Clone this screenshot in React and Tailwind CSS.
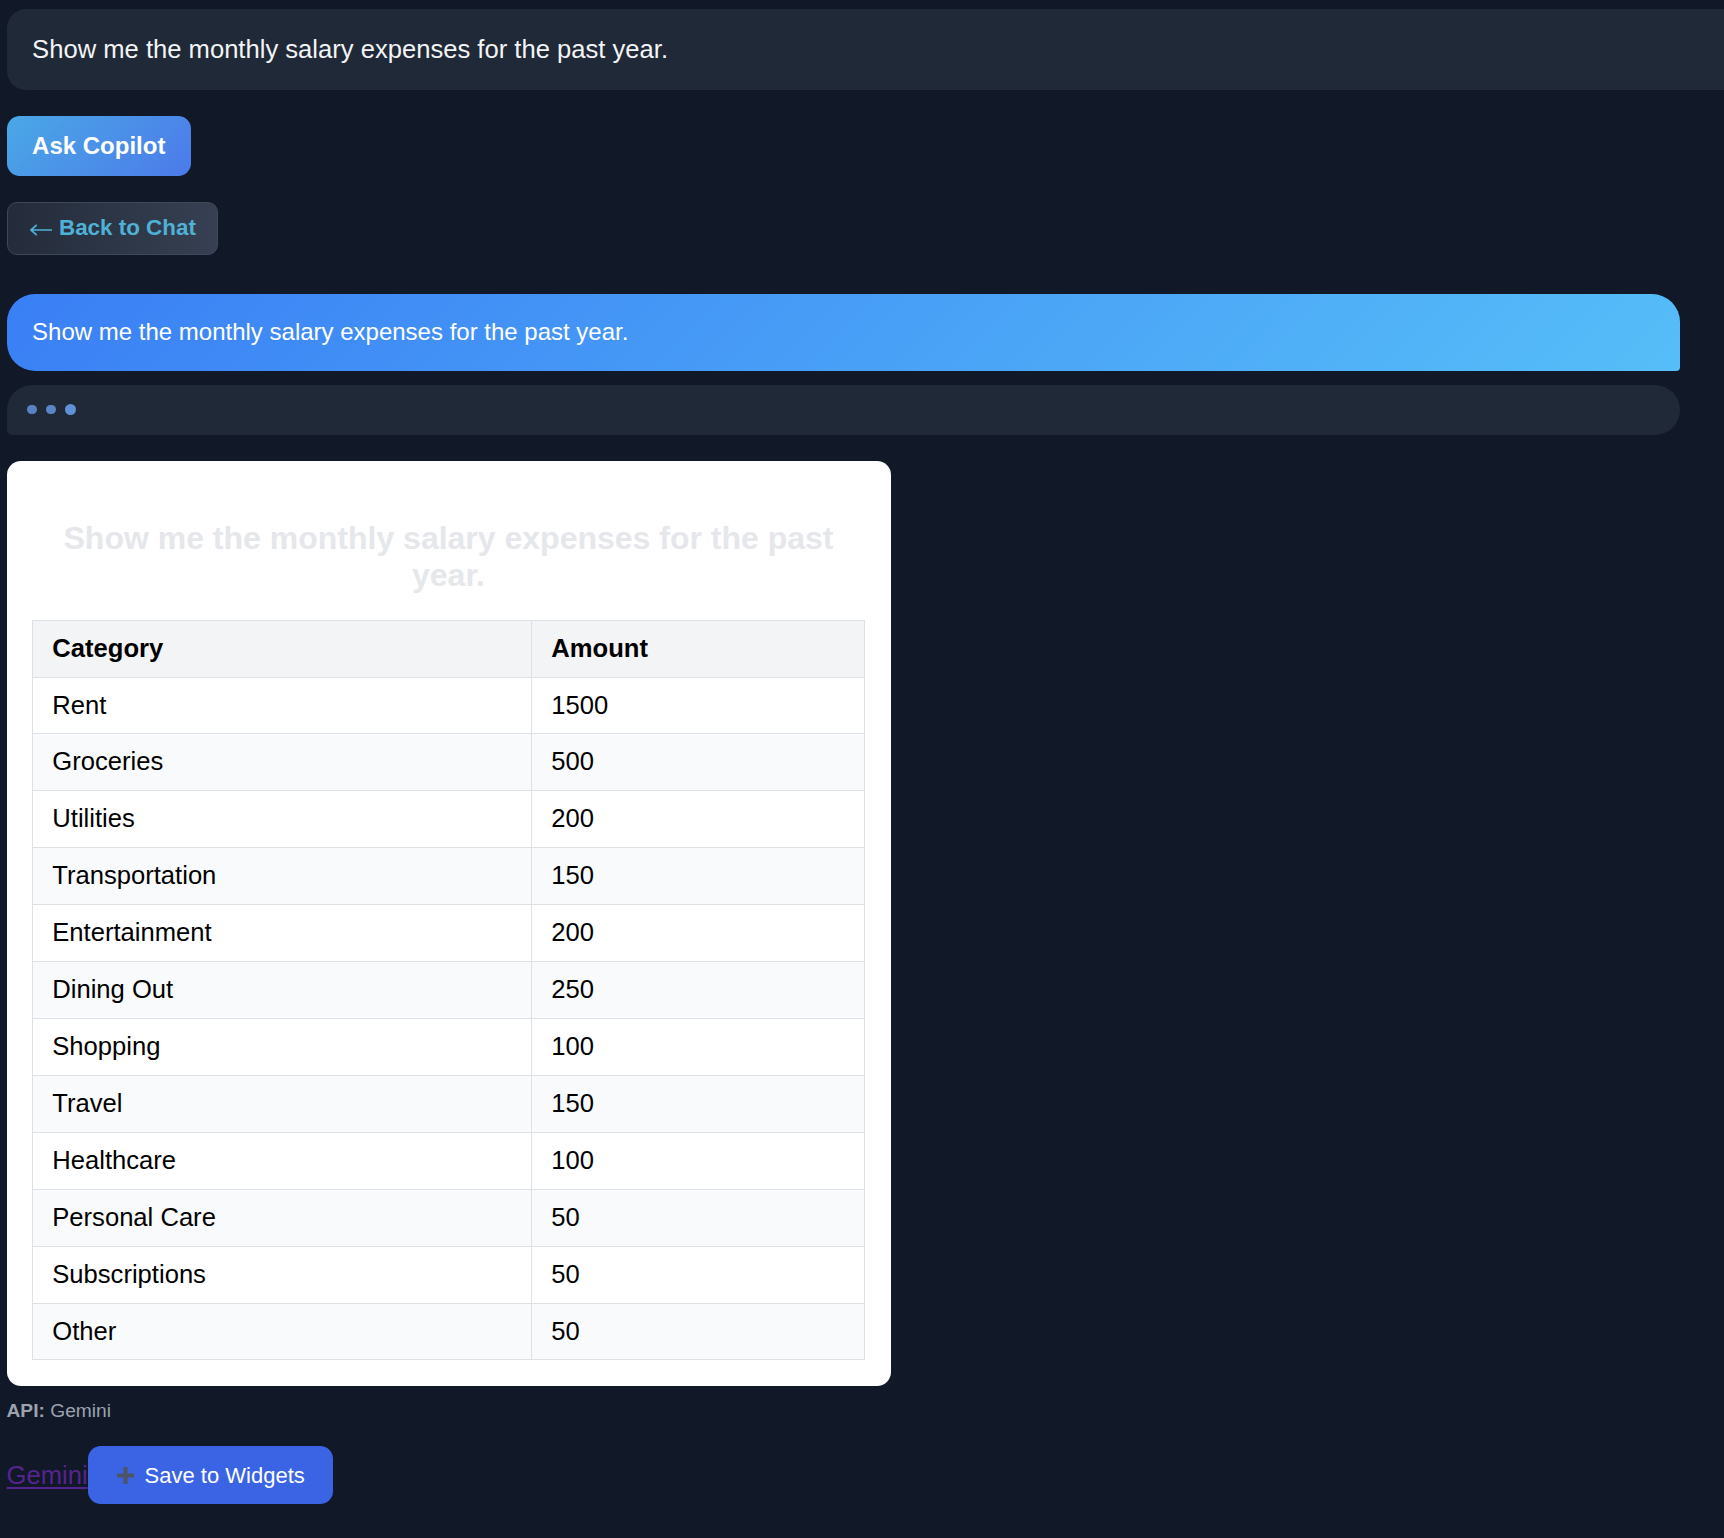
import React from "react";

const question = "Show me the monthly salary expenses for the past year.";

const rows = [
  ["Rent", "1500"],
  ["Groceries", "500"],
  ["Utilities", "200"],
  ["Transportation", "150"],
  ["Entertainment", "200"],
  ["Dining Out", "250"],
  ["Shopping", "100"],
  ["Travel", "150"],
  ["Healthcare", "100"],
  ["Personal Care", "50"],
  ["Subscriptions", "50"],
  ["Other", "50"],
];

// heavy plus, like the ➕ glyph on the save button
function PlusIcon() {
  return (
    <svg width="17" height="17" viewBox="0 0 17 17" className="shrink-0">
      <path d="M8.5 1.5v14M1.5 8.5h14" stroke="#4b5563" strokeWidth="4.2" strokeLinecap="round" />
    </svg>
  );
}

function ArrowLeft() {
  return (
    <svg width="22" height="12" viewBox="0 0 22 12" className="mr-[7px] mt-[3px] shrink-0">
      <path d="M1 6h20.5M1 6l5.2-4.6M1 6l5.2 4.6" stroke="#4fb1d6" strokeWidth="1.7" fill="none" strokeLinecap="round" />
    </svg>
  );
}

export default function App() {
  return (
    <div className="min-h-screen w-full overflow-hidden bg-[#111827] pt-[8.5px] pl-[6.5px] font-['Liberation_Sans',Arial,sans-serif]">
      {/* input */}
      <div className="w-[1780px] rounded-[19px] bg-[#1f2937] px-[25.6px] py-[26px] text-[25.6px] leading-[29.4px] text-[#f3f4f6]">
        {question}
      </div>

      <div className="mt-[26.2px]">
        <button className="h-[59.5px] rounded-[12.8px] bg-[linear-gradient(135deg,#4aa8e6,#4c7aea)] px-[25.6px] text-[24px] font-bold leading-[27.6px] text-white">
          Ask Copilot
        </button>
      </div>

      <div className="mt-[26px]">
        <button className="flex h-[53px] items-center rounded-[10px] border-[1.6px] border-[#3f4858] bg-[linear-gradient(90deg,#242c3b,#364052)] pl-[22.5px] pr-[21px] text-[22.4px] font-bold leading-[25.8px] text-[#4fb1d6]">
          <ArrowLeft />
          Back to Chat
        </button>
      </div>

      {/* user bubble */}
      <div className="mt-[39.5px] w-[1673.5px] rounded-[28px] rounded-br-[4px] bg-[linear-gradient(135deg,#3a7ff5,#56bef8)] px-[25.6px] py-[19.2px] text-[24px] leading-[38.6px] text-white">
        {question}
      </div>

      {/* typing */}
      <div className="mt-[13.5px] flex h-[50px] w-[1673.5px] items-center gap-[9.6px] rounded-[25px] rounded-bl-[5px] bg-[#1f2937] px-[20.5px]">
        <span className="h-[9.6px] w-[9.6px] rounded-full bg-[#5982c2]" />
        <span className="h-[9.6px] w-[9.6px] rounded-full bg-[#5a86c6]" />
        <span className="h-[10.4px] w-[10.4px] rounded-full bg-[#6091d6]" />
      </div>

      {/* result card */}
      <div className="mt-[26.7px] w-[884px] rounded-[14px] bg-white px-[25.6px] pb-[25.6px] pt-[25.6px]">
        <h2 className="mx-auto mb-[25.7px] mt-[33.5px] px-[20px] text-center text-[32px] font-bold leading-[36.8px] text-[#e5e7eb]">
          {question}
        </h2>
        <table className="w-full border-collapse text-[25.6px] leading-[29.9px] text-black">
          <thead>
            <tr className="bg-[#f3f4f6]">
              <th className="w-[60%] border border-[#dde0e5] px-[19.2px] py-[13px] text-left font-bold">Category</th>
              <th className="border border-[#dde0e5] px-[19.2px] py-[13px] text-left font-bold">Amount</th>
            </tr>
          </thead>
          <tbody>
            {rows.map(([cat, amt], i) => (
              <tr key={cat} className={i % 2 === 1 ? "bg-[#f9fafb]" : "bg-white"}>
                <td className="border border-[#dde0e5] px-[19.2px] py-[13px]">{cat}</td>
                <td className="border border-[#dde0e5] px-[19.2px] py-[13px]">{amt}</td>
              </tr>
            ))}
          </tbody>
        </table>
      </div>

      <div className="mt-[11px] text-[19.2px] leading-[28.8px] text-[#9ca3af]">
        <span className="font-bold">API:</span> Gemini
      </div>

      <div className="mt-[20.5px] flex items-center pb-[30px]">
        <a href="#" className="text-[25.6px] leading-[29.4px] text-[#55248f] underline decoration-[1.6px] underline-offset-[3px]">
          Gemini
        </a>
        <button className="flex h-[58px] items-center gap-[11px] rounded-[12.8px] bg-[#3a64e3] pl-[29px] pr-[28px] text-[22px] leading-[25px] text-white">
          <PlusIcon />
          Save to Widgets
        </button>
      </div>
    </div>
  );
}
